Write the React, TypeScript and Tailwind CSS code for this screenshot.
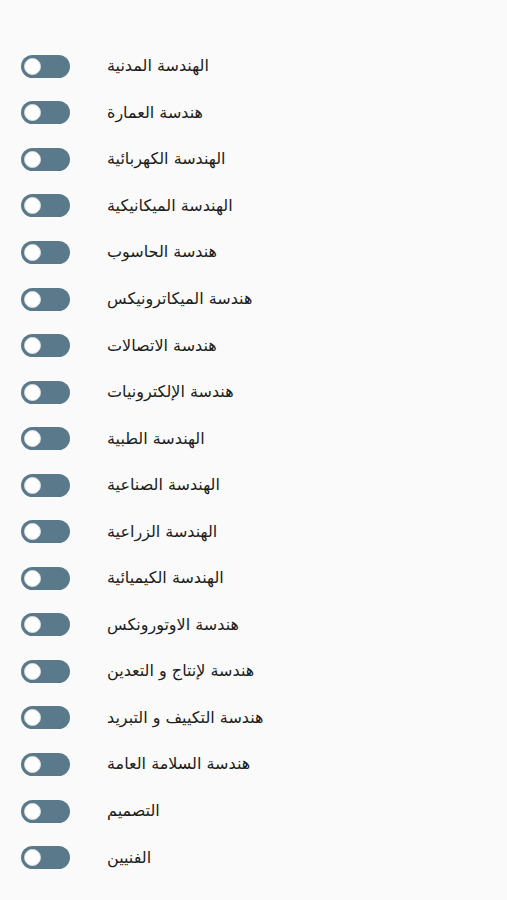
const ITEMS = [
  'الهندسة المدنية',
  'هندسة العمارة',
  'الهندسة الكهربائية',
  'الهندسة الميكانيكية',
  'هندسة الحاسوب',
  'هندسة الميكاترونيكس',
  'هندسة الاتصالات',
  'هندسة الإلكترونيات',
  'الهندسة الطبية',
  'الهندسة الصناعية',
  'الهندسة الزراعية',
  'الهندسة الكيميائية',
  'هندسة الاوتورونكس',
  'هندسة لإنتاج و التعدين',
  'هندسة التكييف و التبريد',
  'هندسة السلامة العامة',
  'التصميم',
  'الفنيين',
]

function Toggle() {
  return (
    <div className="shrink-0 w-[49px] h-[23px] rounded-full bg-[#5a7a8b] flex items-center pl-[3px]">
      <div className="w-[17px] h-[17px] rounded-full bg-white border border-[#d8dde0]" />
    </div>
  )
}

export default function App() {
  return (
    <div className="w-[507px] h-[900px] bg-[#fafafa] overflow-hidden" style={{ fontFamily: '"DejaVu Sans", sans-serif' }}>
      <div className="h-[43px]" />
      {ITEMS.map((label) => (
        <div key={label} className="h-[46.55px] flex items-center pl-[21px]">
          <Toggle />
          <span dir="rtl" className="ml-[37px] text-[16px] text-[#1c1c1c]">{label}</span>
        </div>
      ))}
    </div>
  )
}
